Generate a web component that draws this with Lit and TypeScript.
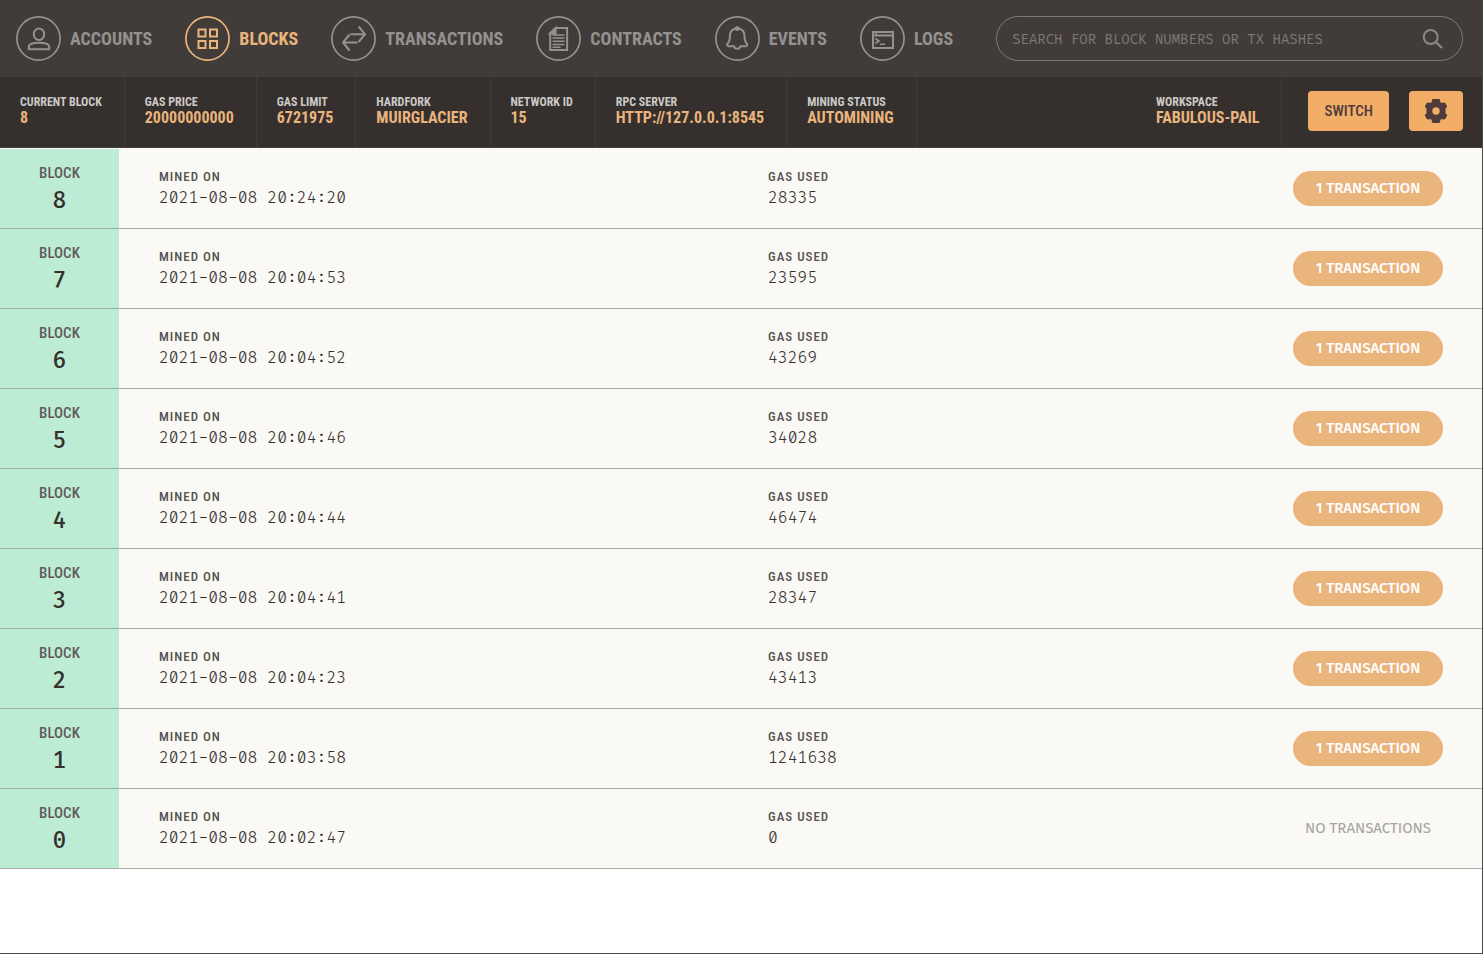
import { LitElement, html, css, svg, TemplateResult } from "lit";
import { customElement, property } from "lit/decorators.js";

interface Block {
  number: number;
  minedOn: string;
  gasUsed: number;
  transactions: number;
}

const BLOCKS: Block[] = [
  { number: 8, minedOn: "2021-08-08 20:24:20", gasUsed: 28335, transactions: 1 },
  { number: 7, minedOn: "2021-08-08 20:04:53", gasUsed: 23595, transactions: 1 },
  { number: 6, minedOn: "2021-08-08 20:04:52", gasUsed: 43269, transactions: 1 },
  { number: 5, minedOn: "2021-08-08 20:04:46", gasUsed: 34028, transactions: 1 },
  { number: 4, minedOn: "2021-08-08 20:04:44", gasUsed: 46474, transactions: 1 },
  { number: 3, minedOn: "2021-08-08 20:04:41", gasUsed: 28347, transactions: 1 },
  { number: 2, minedOn: "2021-08-08 20:04:23", gasUsed: 43413, transactions: 1 },
  { number: 1, minedOn: "2021-08-08 20:03:58", gasUsed: 1241638, transactions: 1 },
  { number: 0, minedOn: "2021-08-08 20:02:47", gasUsed: 0, transactions: 0 },
];

const STATUS = [
  ["Current Block", "8"],
  ["Gas Price", "20000000000"],
  ["Gas Limit", "6721975"],
  ["Hardfork", "Muirglacier"],
  ["Network ID", "15"],
  ["RPC Server", "http://127.0.0.1:8545"],
  ["Mining Status", "Automining"],
];

/* Nav glyphs share a 45 x 45 box with the ring drawn at its edge. */
const NAV: { label: string; icon: TemplateResult }[] = [
  {
    label: "Accounts",
    icon: svg`<ellipse cx="23" cy="18.3" rx="5.2" ry="5.8"/><path d="M12.8 33.3v-2.600c0-3 3.4-4 10.2-4s10.2 1 10.2 4v2.600z"/>`,
  },
  {
    label: "Blocks",
    icon: svg`<path d="M13.500 13.500h7v7h-7zM25 13.500h7v7h-7zM13.500 25h7v7h-7zM25 25h7v7h-7z"/>`,
  },
  {
    label: "Transactions",
    icon: svg`<path d="M19.5 18.2h14.2M27.6 10.5l6.4 7.7-6.4 7.8M26.5 26.5H12.2M18.6 18.5L12 26.5l6.6 8"/>`,
  },
  {
    label: "Contracts",
    icon: svg`<path d="M19.5 11.900h11.6v22H14.2V17.2z"/><path d="M14 17.6l5.6-5.6v5.6z" fill="currentColor"/><path d="M16.500 18.9h12M16.500 22.1h12M16.500 25.3h12M16.500 28.500h12M16.500 31.200h8" stroke-width="1.500"/>`,
  },
  {
    label: "Events",
    icon: svg`<path d="M20.700 12.800c.5-1.600 3.500-1.600 4 0 3.400.8 5.300 3.600 5.300 7.300 0 4 .5 5.700 2.200 7.400 1.100 1.100.6 2.700-.9 2.700h-5.300c-.6 3.400-6 3.400-6.600 0h-5.300c-1.500 0-2-1.600-.9-2.700 1.700-1.700 2.200-3.400 2.200-7.400 0-3.700 1.900-6.500 5.300-7.300z" transform="translate(-.5 0)"/><circle cx="22.200" cy="12.600" r="1.400" fill="currentColor"/>`,
  },
  {
    label: "Logs",
    icon: svg`<path d="M13 15.900h20v16H13zM13 19.500h20"/><path d="M15.500 17.900h1.500" stroke-width="2"/><path d="M15.300 22.500l3.700 2.500-3.700 2.500M20 28.300h5" stroke-width="1.600"/>`,
  },
];

const palette = css`
  :host {
    --condensed: "Roboto Condensed", "Liberation Sans Narrow", Roboto, sans-serif;
    --mono: "Fira Mono", "Fira Code", "Liberation Mono", monospace;
    --light-mono: "Fira Code", "Fira Mono", "Liberation Mono", monospace;
    --sans: "Fira Sans", Roboto, sans-serif;
  }
  * {
    box-sizing: border-box;
  }
`;

@customElement("block-row")
class BlockRow extends LitElement {
  @property({ attribute: false }) block!: Block;

  static styles = [
    palette,
    css`
      :host {
        display: flex;
        height: 80px;
        background: #faf9f5;
        border-bottom: 1px solid #aaaaa7;
      }
      .number {
        width: 119px;
        flex: none;
        padding-top: 14px;
        background: #bdecd5;
        text-align: center;
        font: 500 15px/20px var(--condensed);
        color: #5f5c58;
        text-transform: uppercase;
      }
      .number strong {
        display: block;
        font: 500 23px/34px var(--mono);
        color: #35302d;
      }
      .details {
        flex: 1;
        display: grid;
        grid-template-columns: minmax(0, 29fr) minmax(0, 25fr) 150px;
        padding: 0 40px;
      }
      dl {
        margin: 0;
        padding-top: 18px;
      }
      dt {
        font: 500 13px/20px var(--condensed);
        letter-spacing: 1px;
        text-transform: uppercase;
        color: #55524f;
      }
      dd {
        margin: 0;
        font: 300 16px/22px var(--light-mono);
        color: #35302d;
      }
      .tx {
        align-self: center;
        height: 35px;
        border: 0;
        border-radius: 18px;
        background: #eab47d;
        color: #fff;
        font: 500 15px/35px var(--sans);
        text-transform: uppercase;
        text-align: center;
        padding: 0;
      }
      .none {
        background: none;
        color: #a5a3a0;
        font-weight: 400;
      }
    `,
  ];

  render() {
    const b = this.block;
    return html`
      <div class="number">Block<strong>${b.number}</strong></div>
      <div class="details">
        <dl><dt>Mined on</dt><dd>${b.minedOn}</dd></dl>
        <dl><dt>Gas used</dt><dd>${b.gasUsed}</dd></dl>
        ${b.transactions > 0
          ? html`<button class="tx">${b.transactions} transaction</button>`
          : html`<span class="tx none">No transactions</span>`}
      </div>
    `;
  }
}

@customElement("app-root")
class AppRoot extends LitElement {
  static styles = [
    palette,
    css`
      :host {
        display: block;
        min-height: 100vh;
        background: #fff;
      }
      :host::after {
        content: "";
        position: fixed;
        inset: 0;
        border: solid #4a4a4a;
        border-width: 0 1px 1px 0;
        pointer-events: none;
      }
      .top {
        display: flex;
        align-items: center;
        height: 77px;
        padding: 0 20px 0 16px;
        background: #413c39;
      }
      nav {
        display: flex;
        gap: 33px;
      }
      .link {
        display: flex;
        align-items: center;
        gap: 9px;
        font: 700 18px/24px var(--condensed);
        color: #949290;
        text-transform: uppercase;
        text-decoration: none;
      }
      .link.active {
        color: #eab47d;
      }
      .ring {
        width: 45px;
        height: 45px;
        flex: none;
        fill: none;
        stroke: currentColor;
        stroke-width: 2;
      }
      .search {
        flex: 1;
        display: flex;
        align-items: center;
        height: 45px;
        margin-left: 43px;
        padding: 0 19px 0 15px;
        border: 1px solid #7e7c7a;
        border-radius: 23px;
        color: #8b8987;
      }
      .search input {
        flex: 1;
        min-width: 0;
        padding: 2px 0 0;
        border: 0;
        outline: 0;
        background: none;
        font: 14px/20px var(--mono);
        color: #8b8987;
      }
      .search input::placeholder {
        color: #7b7876;
        text-transform: uppercase;
        opacity: 1;
      }
      .search svg {
        width: 21px;
        height: 21px;
        fill: none;
        stroke: currentColor;
        stroke-width: 2;
      }
      .bar {
        display: flex;
        height: 71px;
        background: #35302d;
        border-bottom: 1px solid #413c39;
      }
      .stat {
        padding: 17px 22px 0 20px;
        border-right: 1px solid #413c39;
        text-transform: uppercase;
        white-space: nowrap;
      }
      .stat b {
        display: block;
        font: 700 12px/16px var(--condensed);
        color: #cbc9c7;
      }
      .stat span {
        display: block;
        font: 700 16px/16px var(--condensed);
        color: #eab47d;
      }
      .workspace {
        margin-left: auto;
      }
      .actions {
        display: flex;
        gap: 20px;
        padding: 14px 20px 0 26px;
      }
      .actions button {
        display: flex;
        align-items: center;
        justify-content: center;
        height: 40px;
        padding: 0 16px;
        border: 0;
        border-radius: 4px;
        background: #f2ae67;
        color: #4f3a3c;
        font: 500 15px/20px var(--condensed);
        text-transform: uppercase;
      }
      .actions svg {
        width: 22px;
        height: 24px;
        fill: currentColor;
      }
      .list {
        padding-top: 1px;
        background: #faf9f5;
      }
    `,
  ];

  render() {
    return html`
      <header>
        <div class="top">
          <nav>
            ${NAV.map(
              (n) => html`<a class="link ${n.label === "Blocks" ? "active" : ""}" href="#${n.label.toLowerCase()}">
                <svg class="ring" viewBox="0 0 45 45"><circle cx="22.5" cy="22.5" r="21.6" stroke-width="1.700"/>${n.icon}</svg>
                ${n.label}</a>`
            )}
          </nav>
          <label class="search">
            <input type="text" placeholder="Search for block numbers or tx hashes" aria-label="Search" />
            <svg viewBox="0 0 21 21"><circle cx="8.700" cy="9" r="7" /><path d="M13.700 14l6.300 6" stroke-width="2.400"/></svg>
          </label>
        </div>
        <div class="bar">
          ${STATUS.map(([k, v]) => html`<div class="stat"><b>${k}</b><span>${v}</span></div>`)}
          <div class="stat workspace"><b>Workspace</b><span>Fabulous-Pail</span></div>
          <div class="actions">
            <button>Switch</button>
            <button aria-label="Settings">
              <svg viewBox="0 0 22 24"><path fill-rule="evenodd" d="M8.200 0h5.600q1 0 1.200 1l.4 2.200 1.600.9 1.600-.6q1.200-.3 1.800.7l1.500 2.800q.5 1-.4 1.700l-1 .9v4.800l1 .9q.9.700.4 1.700l-1.500 2.800q-.6 1-1.800.7l-1.600-.6-1.600.9-.4 2.200q-.2 1-1.200 1H8.200q-1 0-1.200-1l-.4-2.200-1.600-.9-1.600.6q-1.200.3-1.800-.7L.1 17q-.5-1 .4-1.700l1-.9V9.600l-1-.9q-.9-.7-.4-1.700l1.500-2.800q.6-1 1.800-.7l1.600.6 1.600-.9L7 1q.2-1 1.200-1zM11 8.300a3.700 3.700 0 1 0 0 7.400 3.700 3.700 0 0 0 0-7.400z"/></svg>
            </button>
          </div>
        </div>
      </header>
      <main class="list">${BLOCKS.map((b) => html`<block-row .block=${b}></block-row>`)}</main>
    `;
  }
}
